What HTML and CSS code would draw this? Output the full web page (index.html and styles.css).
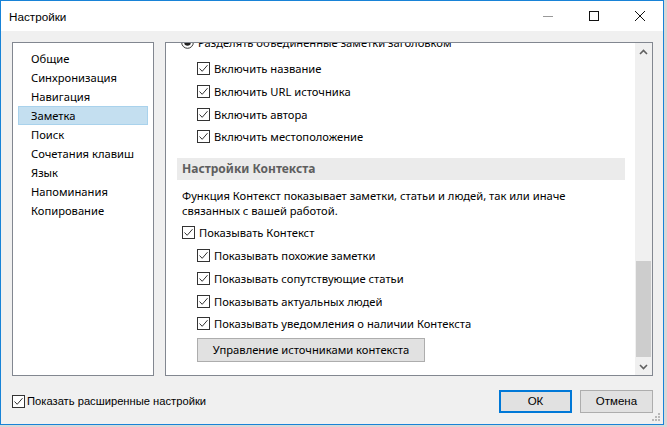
FILE: index.html
```html
<!DOCTYPE html>
<html lang="ru">
<head>
<meta charset="utf-8">
<title>Настройки</title>
<link rel="stylesheet" href="styles.css">
</head>
<body>
<div class="window">
  <div class="titlebar">
    <span class="title">Настройки</span>
    <div class="caption">
      <span class="cbtn"><svg width="10" height="10" viewBox="0 0 10 10"><path d="M0 5.5H10" stroke="#999" stroke-width="1"/></svg></span>
      <span class="cbtn"><svg width="10" height="10" viewBox="0 0 10 10"><rect x="0.5" y="0.5" width="9" height="9" fill="none" stroke="#111" stroke-width="1"/></svg></span>
      <span class="cbtn"><svg width="10" height="10" viewBox="0 0 10 10"><path d="M0 0L10 10M10 0L0 10" stroke="#111" stroke-width="1"/></svg></span>
    </div>
  </div>
  <div class="body">
    <div class="main">
      <ul class="nav">
        <li class="nav-item">Общие</li>
        <li class="nav-item">Синхронизация</li>
        <li class="nav-item">Навигация</li>
        <li class="nav-item selected">Заметка</li>
        <li class="nav-item">Поиск</li>
        <li class="nav-item">Сочетания клавиш</li>
        <li class="nav-item">Язык</li>
        <li class="nav-item">Напоминания</li>
        <li class="nav-item">Копирование</li>
      </ul>
      <div class="panel">
        <div class="viewport">
          <div class="content">
            <div class="row lvl0 radio-row">
              <svg class="radio" width="13" height="13" viewBox="0 0 13 13"><circle cx="6.5" cy="6.5" r="5.8" fill="#fff" stroke="#333" stroke-width="1"/><circle cx="6.5" cy="6.5" r="3.3" fill="#222"/></svg>
              <span>Разделять объединенные заметки заголовком</span>
            </div>
            <div class="row lvl1"><svg class="cb" width="13" height="13" viewBox="0 0 13 13"><rect x="0.5" y="0.5" width="12" height="12" fill="#fff" stroke="#333"/><path d="M2.5 6.5L5.2 9.3L10.5 3.2" fill="none" stroke="#333" stroke-width="1"/></svg><span>Включить название</span></div>
            <div class="row lvl1"><svg class="cb" width="13" height="13" viewBox="0 0 13 13"><rect x="0.5" y="0.5" width="12" height="12" fill="#fff" stroke="#333"/><path d="M2.5 6.5L5.2 9.3L10.5 3.2" fill="none" stroke="#333" stroke-width="1"/></svg><span>Включить URL источника</span></div>
            <div class="row lvl1"><svg class="cb" width="13" height="13" viewBox="0 0 13 13"><rect x="0.5" y="0.5" width="12" height="12" fill="#fff" stroke="#333"/><path d="M2.5 6.5L5.2 9.3L10.5 3.2" fill="none" stroke="#333" stroke-width="1"/></svg><span>Включить автора</span></div>
            <div class="row lvl1"><svg class="cb" width="13" height="13" viewBox="0 0 13 13"><rect x="0.5" y="0.5" width="12" height="12" fill="#fff" stroke="#333"/><path d="M2.5 6.5L5.2 9.3L10.5 3.2" fill="none" stroke="#333" stroke-width="1"/></svg><span>Включить местоположение</span></div>

            <div class="section-header">Настройки Контекста</div>
            <p class="desc">Функция Контекст показывает заметки, статьи и людей, так или иначе<br>связанных с вашей работой.</p>

            <div class="row lvl0 show-ctx"><svg class="cb" width="13" height="13" viewBox="0 0 13 13"><rect x="0.5" y="0.5" width="12" height="12" fill="#fff" stroke="#333"/><path d="M2.5 6.5L5.2 9.3L10.5 3.2" fill="none" stroke="#333" stroke-width="1"/></svg><span>Показывать Контекст</span></div>
            <div class="subs">
              <div class="row lvl1"><svg class="cb" width="13" height="13" viewBox="0 0 13 13"><rect x="0.5" y="0.5" width="12" height="12" fill="#fff" stroke="#333"/><path d="M2.5 6.5L5.2 9.3L10.5 3.2" fill="none" stroke="#333" stroke-width="1"/></svg><span>Показывать похожие заметки</span></div>
              <div class="row lvl1"><svg class="cb" width="13" height="13" viewBox="0 0 13 13"><rect x="0.5" y="0.5" width="12" height="12" fill="#fff" stroke="#333"/><path d="M2.5 6.5L5.2 9.3L10.5 3.2" fill="none" stroke="#333" stroke-width="1"/></svg><span>Показывать сопутствующие статьи</span></div>
              <div class="row lvl1"><svg class="cb" width="13" height="13" viewBox="0 0 13 13"><rect x="0.5" y="0.5" width="12" height="12" fill="#fff" stroke="#333"/><path d="M2.5 6.5L5.2 9.3L10.5 3.2" fill="none" stroke="#333" stroke-width="1"/></svg><span>Показывать актуальных людей</span></div>
              <div class="row lvl1"><svg class="cb" width="13" height="13" viewBox="0 0 13 13"><rect x="0.5" y="0.5" width="12" height="12" fill="#fff" stroke="#333"/><path d="M2.5 6.5L5.2 9.3L10.5 3.2" fill="none" stroke="#333" stroke-width="1"/></svg><span>Показывать уведомления о наличии Контекста</span></div>
            </div>
            <button class="btn manage">Управление источниками контекста</button>
          </div>
        </div>
        <div class="scrollbar">
          <div class="sb-arrow"><svg width="9" height="6" viewBox="0 0 9 6"><path d="M1 5L4.5 1.5L8 5" fill="none" stroke="#606060" stroke-width="1.6"/></svg></div>
          <div class="sb-track"><div class="sb-thumb"></div></div>
          <div class="sb-arrow"><svg width="9" height="6" viewBox="0 0 9 6"><path d="M1 1L4.5 4.5L8 1" fill="none" stroke="#606060" stroke-width="1.6"/></svg></div>
        </div>
      </div>
    </div>
    <div class="footer">
      <label class="adv"><svg class="cb" width="13" height="13" viewBox="0 0 13 13"><rect x="0.5" y="0.5" width="12" height="12" fill="#fff" stroke="#333"/><path d="M2.5 6.5L5.2 9.3L10.5 3.2" fill="none" stroke="#333" stroke-width="1"/></svg><span>Показать расширенные настройки</span></label>
      <div class="actions">
        <button class="btn dlg default">ОК</button>
        <button class="btn dlg">Отмена</button>
      </div>
    </div>
  </div>
  <svg class="grip" width="9" height="9" viewBox="0 0 9 9">
    <rect x="7" y="1" width="2" height="2" fill="#b8b8b8"/>
    <rect x="4" y="4" width="2" height="2" fill="#b8b8b8"/>
    <rect x="7" y="4" width="2" height="2" fill="#b8b8b8"/>
    <rect x="1" y="7" width="2" height="2" fill="#b8b8b8"/>
    <rect x="4" y="7" width="2" height="2" fill="#b8b8b8"/>
    <rect x="7" y="7" width="2" height="2" fill="#b8b8b8"/>
  </svg>
</div>
</body>
</html>
```

FILE: styles.css
```css
* { box-sizing: border-box; }
html, body { margin: 0; padding: 0; }
body {
  background: #d8d8d8;
  font-family: "Noto Sans", "Liberation Sans", sans-serif;
  font-size: 11.2px;
  color: #000;
  width: 667px;
  height: 427px;
  overflow: hidden;
}
.window {
  position: relative;
  width: 664px;
  height: 425px;
  border: 1px solid #1883d7;
  background: #f0f0f0;
  display: flex;
  flex-direction: column;
}
.titlebar {
  height: 30px;
  background: #fff;
  display: flex;
  align-items: center;
  justify-content: space-between;
  flex: none;
}
.title {
  padding-left: 8px;
  font-family: "Liberation Sans", Arial, sans-serif;
  font-size: 11.7px;
}
.caption { display: flex; height: 30px; }
.cbtn {
  width: 46px;
  height: 30px;
  display: flex;
  align-items: center;
  justify-content: center;
}
.body {
  flex: 1;
  display: flex;
  flex-direction: column;
  padding: 11px 10px 0 11px;
}
.main {
  display: flex;
  gap: 11px;
  height: 334px;
  flex: none;
}
.nav {
  list-style: none;
  margin: 0;
  padding: 6px 5px 0 5px;
  width: 142px;
  height: 100%;
  background: #fff;
  border: 1px solid #828790;
}
.nav-item {
  height: 19px;
  line-height: 18px;
  padding-left: 12px;
  border: 1px solid transparent;
  white-space: nowrap;
}
.nav-item.selected {
  background: #c4dff0;
  border-color: #a9d2ec;
}
.panel {
  width: 488px;
  height: 100%;
  background: #fff;
  border: 1px solid #828790;
  display: flex;
}
.viewport {
  flex: 1;
  overflow: hidden;
}
.content {
  margin-top: -14px;
  padding: 0 10px 0 11px;
}
.row {
  height: 22.6px;
  display: flex;
  align-items: center;
  white-space: nowrap;
}
.row.radio-row { height: 28.6px; padding-bottom: 2px; }
.row.lvl0 { padding-left: 4px; }
.row.lvl0 .cb { margin-left: 1px; margin-right: 4px; }
.row.lvl1 { padding-left: 20px; }
.row.lvl1 .cb { margin-right: 4px; }
.radio { margin-right: 4px; flex: none; }
.cb { flex: none; display: block; }
.section-header {
  margin-top: 10px;
  height: 22px;
  line-height: 22px;
  background: #ebebeb;
  color: #5e5e5e;
  font-weight: bold;
  font-size: 12px;
  padding-left: 5px;
}
.desc {
  margin: 8px 0 0 5px;
  line-height: 15px;
}
.show-ctx { margin-top: 3px; }
.subs { margin-top: 1px; }
.btn {
  font-family: inherit;
  font-size: 11.2px;
  color: #000;
  background: #e1e1e1;
  border: 1px solid #adadad;
  padding: 0;
  margin: 0;
}
.manage {
  margin: 3px 0 0 20px;
  width: 228px;
  height: 24px;
}
.scrollbar {
  width: 17px;
  flex: none;
  background: #f0f0f0;
  display: flex;
  flex-direction: column;
}
.sb-arrow {
  height: 17px;
  display: flex;
  align-items: center;
  justify-content: center;
  flex: none;
}
.sb-track { flex: 1; padding: 201px 1px 0 1px; }
.sb-thumb { height: 96px; background: #cdcdcd; }
.footer {
  flex: 1;
  display: flex;
  align-items: center;
  justify-content: space-between;
  padding-top: 2px;
  font-family: "Liberation Sans", Arial, sans-serif;
  font-size: 11.2px;
}
.adv {
  display: flex;
  align-items: center;
  gap: 2px;
}
.actions { display: flex; gap: 8px; }
.dlg {
  width: 73px;
  height: 23px;
  font-family: "Liberation Sans", Arial, sans-serif;
  font-size: 11.5px;
}
.dlg.default { border: 2px solid #0078d7; }
.grip { position: absolute; right: 3px; bottom: 3px; }
```
